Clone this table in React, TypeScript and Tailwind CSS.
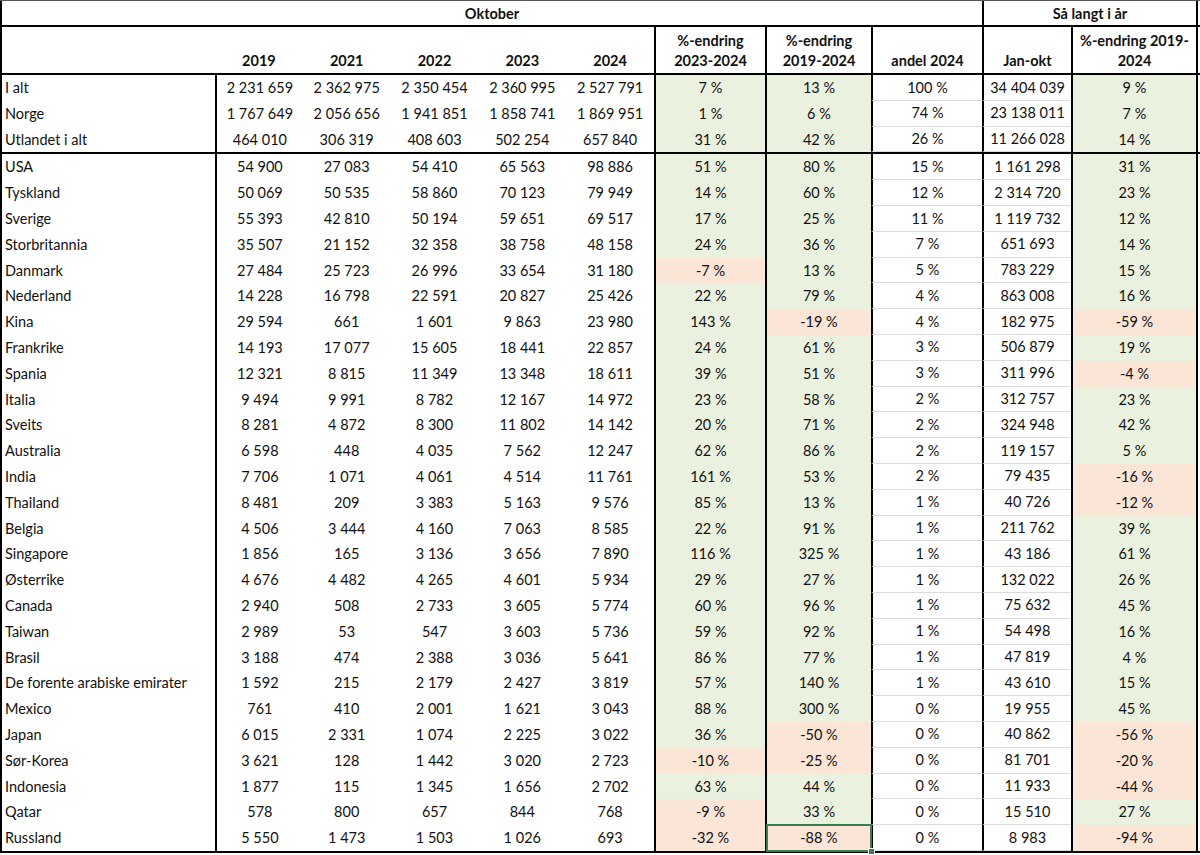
import React from "react";

type Row = [string, string, string, string, string, string, number, number, number, string, number];

const TOP: Row[] = [
  ["I alt", "2 231 659", "2 362 975", "2 350 454", "2 360 995", "2 527 791", 7, 13, 100, "34 404 039", 9],
  ["Norge", "1 767 649", "2 056 656", "1 941 851", "1 858 741", "1 869 951", 1, 6, 74, "23 138 011", 7],
  ["Utlandet i alt", "464 010", "306 319", "408 603", "502 254", "657 840", 31, 42, 26, "11 266 028", 14],
];

const BODY: Row[] = [
  ["USA", "54 900", "27 083", "54 410", "65 563", "98 886", 51, 80, 15, "1 161 298", 31],
  ["Tyskland", "50 069", "50 535", "58 860", "70 123", "79 949", 14, 60, 12, "2 314 720", 23],
  ["Sverige", "55 393", "42 810", "50 194", "59 651", "69 517", 17, 25, 11, "1 119 732", 12],
  ["Storbritannia", "35 507", "21 152", "32 358", "38 758", "48 158", 24, 36, 7, "651 693", 14],
  ["Danmark", "27 484", "25 723", "26 996", "33 654", "31 180", -7, 13, 5, "783 229", 15],
  ["Nederland", "14 228", "16 798", "22 591", "20 827", "25 426", 22, 79, 4, "863 008", 16],
  ["Kina", "29 594", "661", "1 601", "9 863", "23 980", 143, -19, 4, "182 975", -59],
  ["Frankrike", "14 193", "17 077", "15 605", "18 441", "22 857", 24, 61, 3, "506 879", 19],
  ["Spania", "12 321", "8 815", "11 349", "13 348", "18 611", 39, 51, 3, "311 996", -4],
  ["Italia", "9 494", "9 991", "8 782", "12 167", "14 972", 23, 58, 2, "312 757", 23],
  ["Sveits", "8 281", "4 872", "8 300", "11 802", "14 142", 20, 71, 2, "324 948", 42],
  ["Australia", "6 598", "448", "4 035", "7 562", "12 247", 62, 86, 2, "119 157", 5],
  ["India", "7 706", "1 071", "4 061", "4 514", "11 761", 161, 53, 2, "79 435", -16],
  ["Thailand", "8 481", "209", "3 383", "5 163", "9 576", 85, 13, 1, "40 726", -12],
  ["Belgia", "4 506", "3 444", "4 160", "7 063", "8 585", 22, 91, 1, "211 762", 39],
  ["Singapore", "1 856", "165", "3 136", "3 656", "7 890", 116, 325, 1, "43 186", 61],
  ["Østerrike", "4 676", "4 482", "4 265", "4 601", "5 934", 29, 27, 1, "132 022", 26],
  ["Canada", "2 940", "508", "2 733", "3 605", "5 774", 60, 96, 1, "75 632", 45],
  ["Taiwan", "2 989", "53", "547", "3 603", "5 736", 59, 92, 1, "54 498", 16],
  ["Brasil", "3 188", "474", "2 388", "3 036", "5 641", 86, 77, 1, "47 819", 4],
  ["De forente arabiske emirater", "1 592", "215", "2 179", "2 427", "3 819", 57, 140, 1, "43 610", 15],
  ["Mexico", "761", "410", "2 001", "1 621", "3 043", 88, 300, 0, "19 955", 45],
  ["Japan", "6 015", "2 331", "1 074", "2 225", "3 022", 36, -50, 0, "40 862", -56],
  ["Sør-Korea", "3 621", "128", "1 442", "3 020", "2 723", -10, -25, 0, "81 701", -20],
  ["Indonesia", "1 877", "115", "1 345", "1 656", "2 702", 63, 44, 0, "11 933", -44],
  ["Qatar", "578", "800", "657", "844", "768", -9, 33, 0, "15 510", 27],
  ["Russland", "5 550", "1 473", "1 503", "1 026", "693", -32, -88, 0, "8 983", -94],
];

const GRID = "grid grid-cols-[215px_repeat(5,87.8px)_111px_106px_111px_89px_127px]";

function pctBg(v: number) {
  return v < 0 ? "bg-[#fbe5d6]" : "bg-[#ebf1df]";
}

function fmt(v: number) {
  return `${v} %`;
}

function DataRow({ r, selected }: { r: Row; selected?: boolean }) {
  const [label, a, b, c, d, e, p1, p2, andel, ytd, p3] = r;
  const cell = "flex items-center justify-center whitespace-nowrap";
  return (
    <div className={`${GRID} h-[25.8px]`}>
      <div className="flex items-center whitespace-nowrap border-l-2 border-black pl-[3px]">{label}</div>
      <div className={`${cell} border-l-2 border-black`}>{a}</div>
      <div className={cell}>{b}</div>
      <div className={cell}>{c}</div>
      <div className={cell}>{d}</div>
      <div className={cell}>{e}</div>
      <div className={`${cell} border-l-2 border-black ${pctBg(p1)}`}>{fmt(p1)}</div>
      <div className={`${cell} relative border-l-2 border-black ${pctBg(p2)}`}>
        {fmt(p2)}
        {selected && (
          <div className="absolute -left-[1px] -top-[1px] -right-[1px] -bottom-[1px] border-2 border-[#3b7d4b]">
            <div className="absolute -bottom-[5px] -right-[5px] h-[7px] w-[7px] border border-white bg-[#3b7d4b]" />
          </div>
        )}
      </div>
      <div className={`${cell} border-l-2 border-b border-black border-b-[#dcdcdc]`}>{fmt(andel)}</div>
      <div className={`${cell} border-l-2 border-b border-black border-b-[#dcdcdc]`}>{ytd}</div>
      <div className={`${cell} border-l-2 border-r-2 border-black ${pctBg(p3)}`}>{fmt(p3)}</div>
    </div>
  );
}

export default function App() {
  return (
    <div className="h-[855px] w-[1200px] overflow-hidden bg-white font-['Lato',sans-serif] text-[14.5px] text-[#111]">
      {/* Header row 1 */}
      <div className={`${GRID} h-[27px] border-t border-b-2 border-t-[#555] border-b-black font-bold`}>
        <div className="col-span-9 flex items-center justify-center border-l-2 border-black pt-[1px]">Oktober</div>
        <div className="col-span-2 flex items-center justify-center border-l-2 border-r-2 border-black pt-[1px]">
          Så langt i år
        </div>
      </div>
      {/* Header row 2 */}
      <div className={`${GRID} h-[48px] border-b-2 border-black font-bold leading-[20px]`}>
        <div className="border-l-2 border-black" />
        {["2019", "2021", "2022", "2023", "2024"].map((y) => (
          <div key={y} className="flex items-end justify-center pb-[2px]">
            {y}
          </div>
        ))}
        <div className="flex flex-col items-center justify-center border-l-2 border-black pt-[1px] text-center">
          <span>%-endring</span>
          <span>2023-2024</span>
        </div>
        <div className="flex flex-col items-center justify-center border-l-2 border-black pt-[1px] text-center">
          <span>%-endring</span>
          <span>2019-2024</span>
        </div>
        <div className="flex items-end justify-center border-l-2 border-black pb-[2px]">andel 2024</div>
        <div className="flex items-end justify-center border-l-2 border-black pb-[2px]">Jan-okt</div>
        <div className="flex flex-col items-center justify-center border-l-2 border-r-2 border-black pt-[1px] text-center">
          <span>%-endring 2019-</span>
          <span>2024</span>
        </div>
      </div>
      {/* Totals */}
      <div className="border-b-2 border-black">
        {TOP.map((r) => (
          <DataRow key={r[0]} r={r} />
        ))}
      </div>
      {/* Countries */}
      <div className="border-b-2 border-black">
        {BODY.map((r) => (
          <DataRow key={r[0]} r={r} selected={r[0] === "Russland"} />
        ))}
      </div>
    </div>
  );
}
